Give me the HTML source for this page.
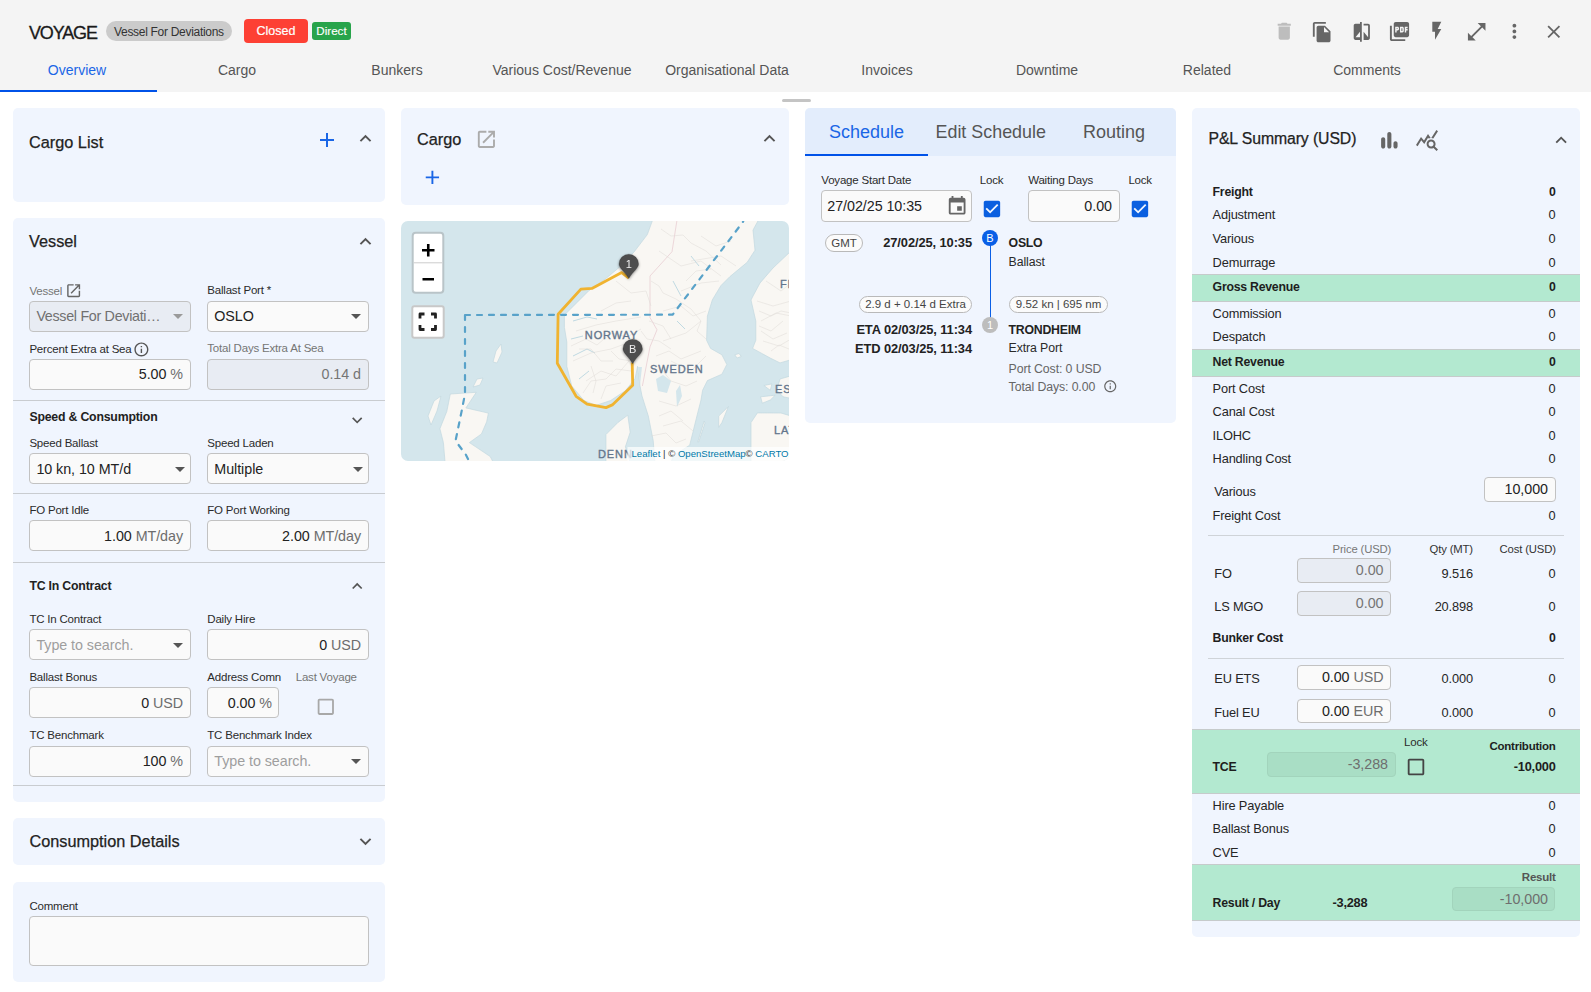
<!DOCTYPE html>
<html><head><meta charset="utf-8">
<style>
html,body{margin:0;padding:0}
body{width:1591px;height:992px;position:relative;overflow:hidden;background:#fff;font-family:"Liberation Sans",sans-serif;color:#212121}
.a{position:absolute}
.t{position:absolute;white-space:nowrap;line-height:20px}
.r{text-align:right}
.c{text-align:center}
.b{font-weight:bold}
.m{-webkit-text-stroke:0.35px currentColor}
.panel{position:absolute;background:#f0f5fe;border-radius:5px}
.inp{position:absolute;box-sizing:border-box;border:1px solid #c2c2c2;border-radius:4px;background:#fafafa}
.dis{background:#e8ecf3}
.hr{position:absolute;height:1px;background:#c9ccd0}
svg{position:absolute}
.lbl{position:absolute;white-space:nowrap;line-height:16px;font-size:12px;color:#2b2b2b}
.val{position:absolute;white-space:nowrap;line-height:20px;font-size:14.5px;color:#212121}
.unit{color:#6d6d6d}
.pl{position:absolute;white-space:nowrap;line-height:20px;font-size:13px;color:#262626}

.ico{position:absolute;fill:#666}
.tab{position:absolute;top:60px;width:160px;text-align:center;font-size:14px;line-height:20px;color:#555;white-space:nowrap}
.lb{position:absolute;white-space:nowrap;line-height:16px;font-size:11.5px;letter-spacing:-0.2px;color:#2b2b2b}
.vt{position:absolute;white-space:nowrap;line-height:20px;font-size:14.3px;letter-spacing:-0.05px;color:#222}
.ph{color:#9e9e9e}
.g{color:#757575 !important}
.h2{position:absolute;white-space:nowrap;line-height:20px;font-size:16.3px;color:#222;-webkit-text-stroke:0.25px #222}
.h3{position:absolute;white-space:nowrap;line-height:16px;font-size:12.3px;font-weight:bold;color:#222;letter-spacing:-0.2px}

.sb{position:absolute;white-space:nowrap;line-height:16px;font-size:12.3px;font-weight:bold;letter-spacing:-0.25px;color:#222}
.sr{position:absolute;white-space:nowrap;line-height:16px;font-size:12.3px;letter-spacing:-0.1px;color:#333}
.chip{position:absolute;box-sizing:border-box;border:1px solid #b9b9b9;border-radius:9px;background:#fbfbfb;font-size:11.5px;line-height:15.5px;text-align:center;color:#444;white-space:nowrap}
.pr{position:absolute;white-space:nowrap;line-height:16px;font-size:12.8px;letter-spacing:-0.15px;color:#262626}
.pb{position:absolute;white-space:nowrap;line-height:16px;font-size:12.3px;font-weight:bold;letter-spacing:-0.25px;color:#1e1e1e}
.grn{position:absolute;left:1192px;width:388px;background:#b3e9d0;border-top:1px solid #c6cbcb;border-bottom:1px solid #c6cbcb;box-sizing:border-box}
</style></head><body>
<!-- HEADER -->
<div class="a" style="left:0;top:0;width:1591px;height:92px;background:#f4f4f4"></div>
<div class="a" style="left:0;top:90px;width:157px;height:2px;background:#0052e8"></div>
<div class="t" style="left:29px;top:23px;font-size:18px;line-height:20px;letter-spacing:-1.15px;color:#1a1a1a;-webkit-text-stroke:0.3px #1a1a1a">VOYAGE</div>


<div class="a" style="left:106px;top:21px;width:126px;height:20px;border-radius:10px;background:#cbcbcb"></div>
<div class="t" style="left:114px;top:21.7px;font-size:12px;line-height:20px;letter-spacing:-0.3px;color:#333">Vessel For Deviations</div>
<div class="a" style="left:244px;top:19px;width:64px;height:24px;border-radius:4px;background:#fd4034"></div>
<div class="t c" style="left:244px;top:21px;width:64px;font-size:12.5px;line-height:20px;color:#fff;-webkit-text-stroke:0.2px #fff">Closed</div>
<div class="a" style="left:312px;top:22px;width:39px;height:18px;border-radius:3px;background:#28a44b"></div>
<div class="t c" style="left:312px;top:21px;width:39px;font-size:11.6px;line-height:20px;color:#fff;-webkit-text-stroke:0.15px #fff">Direct</div>
<div class="tab" style="left:-3px;color:#1a66e6">Overview</div>
<div class="tab" style="left:157px">Cargo</div>
<div class="tab" style="left:317px">Bunkers</div>
<div class="tab" style="left:482px">Various Cost/Revenue</div>
<div class="tab" style="left:647px">Organisational Data</div>
<div class="tab" style="left:807px">Invoices</div>
<div class="tab" style="left:967px">Downtime</div>
<div class="tab" style="left:1127px">Related</div>
<div class="tab" style="left:1287px">Comments</div>
<svg class="ico" style="left:1273px;top:20px;fill:#bdbdbd" width="22.5" height="22.5" viewBox="0 0 24 24"><path d="M6 19c0 1.1.9 2 2 2h8c1.1 0 2-.9 2-2V7H6v12zM19 4h-3.5l-1-1h-5l-1 1H5v2h14V4z"/></svg>
<svg class="ico" style="left:1310.5px;top:20.5px" width="22.3" height="22.3" viewBox="0 0 24 24"><path d="M16 1H4c-1.1 0-2 .9-2 2v14h2V3h12V1zm-1 4l6 6v10c0 1.1-.9 2-2 2H7.99C6.89 23 6 22.1 6 21l.01-14c0-1.1.89-2 1.99-2h7zm-1 7h5.5L14 6.5V12z"/></svg>
<svg class="ico" style="left:1350.8px;top:20.5px" width="21.6" height="21.6" viewBox="0 0 24 24"><path d="M10 3H5c-1.11 0-2 .9-2 2v14c0 1.1.89 2 2 2h5v2h2V1h-2v2zm0 15H5l5-6v6zm9-15h-5v2h5v13l-5-6v9h5c1.1 0 2-.9 2-2V5c0-1.1-.9-2-2-2z"/></svg>
<svg class="ico" style="left:1387.7px;top:19.5px" width="23" height="23" viewBox="0 0 24 24"><path d="M20 2H8c-1.1 0-2 .9-2 2v12c0 1.1.9 2 2 2h12c1.1 0 2-.9 2-2V4c0-1.1-.9-2-2-2zm-8.5 7.5c0 .83-.67 1.5-1.5 1.5H9v2H7.5V7H10c.83 0 1.5.67 1.5 1.5v1zm5 2c0 .83-.67 1.5-1.5 1.5h-2.5V7H15c.83 0 1.5.67 1.5 1.5v3zm4-3H19v1h1.5V11H19v2h-1.5V7h3v1.5zM9 9.5h1v-1H9v1zM4 6H2v14c0 1.1.9 2 2 2h14v-2H4V6zm10 5.5h1v-3h-1v3z"/></svg>
<svg class="ico" style="left:1426.3px;top:20.1px" width="21.6" height="21.6" viewBox="0 0 24 24"><path d="M7 2v11h3v9l7-12h-4l4-8z"/></svg>
<svg class="ico" style="left:1464.6px;top:19.7px" width="23.4" height="23.4" viewBox="0 0 24 24"><path d="M21 11V3h-8l3.29 3.29-10 10L3 13v8h8l-3.29-3.29 10-10z"/></svg>
<svg class="ico" style="left:1502.5px;top:20.1px" width="22.8" height="22.8" viewBox="0 0 24 24"><path d="M12 8c1.1 0 2-.9 2-2s-.9-2-2-2-2 .9-2 2 .9 2 2 2zm0 2c-1.1 0-2 .9-2 2s.9 2 2 2 2-.9 2-2-.9-2-2-2zm0 6c-1.1 0-2 .9-2 2s.9 2 2 2 2-.9 2-2-.9-2-2-2z"/></svg>
<svg class="ico" style="left:1542.8px;top:20.5px" width="21.6" height="21.6" viewBox="0 0 24 24"><path d="M19 6.41L17.59 5 12 10.59 6.41 5 5 6.41 10.59 12 5 17.59 6.41 19 12 13.41 17.59 19 19 17.59 13.41 12z"/></svg>

<!-- LEFT COLUMN -->
<div class="panel" style="left:13px;top:108px;width:372px;height:94px"></div>
<div class="panel" style="left:13px;top:218px;width:372px;height:584px"></div>
<div class="panel" style="left:13px;top:818px;width:372px;height:47px"></div>
<div class="panel" style="left:13px;top:882px;width:372px;height:100px"></div>


<div class="h2" style="left:29px;top:132px">Cargo List</div>
<svg class="ico" style="left:315px;top:127.5px;fill:#1a66e6" width="24" height="24" viewBox="0 0 24 24"><path d="M19 13h-6v6h-2v-6H5v-2h6V5h2v6h6v2z"/></svg>
<svg class="ico" style="left:354px;top:127px;fill:#555" width="23" height="23" viewBox="0 0 24 24"><path d="M12 8l-6 6 1.41 1.41L12 10.83l4.59 4.58L18 14z"/></svg>

<div class="h2" style="left:29px;top:231px">Vessel</div>
<svg class="ico" style="left:354px;top:230px;fill:#555" width="23" height="23" viewBox="0 0 24 24"><path d="M12 8l-6 6 1.41 1.41L12 10.83l4.59 4.58L18 14z"/></svg>

<div class="lb g" style="left:29.4px;top:283px">Vessel</div>
<svg class="ico" style="left:64.8px;top:282px;fill:#666" width="17.3" height="17.3" viewBox="0 0 24 24"><path d="M19 19H5V5h7V3H5c-1.11 0-2 .9-2 2v14c0 1.1.89 2 2 2h14c1.1 0 2-.9 2-2v-7h-2v7zM14 3v2h3.59l-9.83 9.83 1.41 1.41L19 6.41V10h2V3h-7z"/></svg>
<div class="lb" style="left:207.3px;top:282px">Ballast Port *</div>
<div class="inp dis" style="left:29px;top:301px;width:162px;height:31px"></div>
<div class="vt" style="left:36.4px;top:306px;color:#707070;letter-spacing:-0.3px">Vessel For Deviati…</div>
<svg class="ico" style="left:166px;top:304px;fill:#9a9a9a" width="24" height="24" viewBox="0 0 24 24"><path d="M7 10l5 5 5-5z"/></svg>
<div class="inp" style="left:207px;top:301px;width:162px;height:31px"></div>
<div class="vt" style="left:214.3px;top:306px">OSLO</div>
<svg class="ico" style="left:344px;top:304px;fill:#555" width="24" height="24" viewBox="0 0 24 24"><path d="M7 10l5 5 5-5z"/></svg>

<div class="lb" style="left:29.4px;top:341px">Percent Extra at Sea</div>
<svg class="ico" style="left:132.6px;top:340.6px;fill:#555" width="16.8" height="16.8" viewBox="0 0 24 24"><path d="M11 7h2v2h-2zm0 4h2v6h-2zm1-9C6.48 2 2 6.48 2 12s4.48 10 10 10 10-4.48 10-10S17.52 2 12 2zm0 18c-4.41 0-8-3.59-8-8s3.59-8 8-8 8 3.59 8 8-3.59 8-8 8z"/></svg>
<div class="lb g" style="left:207.3px;top:340px">Total Days Extra At Sea</div>
<div class="inp" style="left:29px;top:358.5px;width:162px;height:31px"></div>
<div class="vt r" style="left:29px;width:154px;top:364px">5.00 <span class="unit">%</span></div>
<div class="inp dis" style="left:207px;top:358.5px;width:162px;height:31px"></div>
<div class="vt r g" style="left:207px;width:154px;top:364px">0.14 d</div>
<div class="hr" style="left:13px;top:400px;width:372px"></div>

<div class="h3" style="left:29.4px;top:408.5px">Speed &amp; Consumption</div>
<svg class="ico" style="left:347px;top:409.7px;fill:#555" width="20.4" height="20.4" viewBox="0 0 24 24"><path d="M16.59 8.59L12 13.17 7.41 8.59 6 10l6 6 6-6z"/></svg>
<div class="lb" style="left:29.4px;top:435px">Speed Ballast</div>
<div class="lb" style="left:207.3px;top:435px">Speed Laden</div>
<div class="inp" style="left:29px;top:453.3px;width:162px;height:31px"></div>
<div class="vt" style="left:36.4px;top:459px">10 kn, 10 MT/d</div>
<svg class="ico" style="left:168px;top:457px;fill:#555" width="24" height="24" viewBox="0 0 24 24"><path d="M7 10l5 5 5-5z"/></svg>
<div class="inp" style="left:207px;top:453.3px;width:162px;height:31px"></div>
<div class="vt" style="left:214.3px;top:459px">Multiple</div>
<svg class="ico" style="left:346px;top:457px;fill:#555" width="24" height="24" viewBox="0 0 24 24"><path d="M7 10l5 5 5-5z"/></svg>
<div class="hr" style="left:13px;top:493px;width:372px"></div>

<div class="lb" style="left:29.4px;top:502px">FO Port Idle</div>
<div class="lb" style="left:207.3px;top:502px">FO Port Working</div>
<div class="inp" style="left:29px;top:520.4px;width:162px;height:31px"></div>
<div class="vt r" style="left:29px;width:154px;top:526px">1.00 <span class="unit">MT/day</span></div>
<div class="inp" style="left:207px;top:520.4px;width:162px;height:31px"></div>
<div class="vt r" style="left:207px;width:154px;top:526px">2.00 <span class="unit">MT/day</span></div>
<div class="hr" style="left:13px;top:562px;width:372px"></div>

<div class="h3" style="left:29.4px;top:577.7px">TC In Contract</div>
<svg class="ico" style="left:347px;top:576.3px;fill:#555" width="20.4" height="20.4" viewBox="0 0 24 24"><path d="M12 8l-6 6 1.41 1.41L12 10.83l4.59 4.58L18 14z"/></svg>
<div class="lb" style="left:29.4px;top:611px">TC In Contract</div>
<div class="lb" style="left:207.3px;top:611px">Daily Hire</div>
<div class="inp" style="left:29px;top:629.4px;width:162px;height:31px"></div>
<div class="vt ph" style="left:36.4px;top:635px">Type to search.</div>
<svg class="ico" style="left:166px;top:633px;fill:#555" width="24" height="24" viewBox="0 0 24 24"><path d="M7 10l5 5 5-5z"/></svg>
<div class="inp" style="left:207px;top:629.4px;width:162px;height:31px"></div>
<div class="vt r" style="left:207px;width:154px;top:635px">0 <span class="unit">USD</span></div>

<div class="lb" style="left:29.4px;top:669px">Ballast Bonus</div>
<div class="lb" style="left:207.3px;top:669px">Address Comn</div>
<div class="lb g" style="left:295.7px;top:669px">Last Voyage</div>
<div class="inp" style="left:29px;top:687.4px;width:162px;height:31px"></div>
<div class="vt r" style="left:29px;width:154px;top:693px">0 <span class="unit">USD</span></div>
<div class="inp" style="left:207px;top:687.4px;width:72px;height:31px"></div>
<div class="vt r" style="left:207px;width:65px;top:693px">0.00 <span class="unit">%</span></div>
<svg class="ico" style="left:315.3px;top:695.8px;fill:#a8a8a8" width="21.6" height="21.6" viewBox="0 0 24 24"><path d="M19 5v14H5V5h14m0-2H5c-1.1 0-2 .9-2 2v14c0 1.1.9 2 2 2h14c1.1 0 2-.9 2-2V5c0-1.1-.9-2-2-2z"/></svg>

<div class="lb" style="left:29.4px;top:727px">TC Benchmark</div>
<div class="lb" style="left:207.3px;top:727px">TC Benchmark Index</div>
<div class="inp" style="left:29px;top:745.5px;width:162px;height:31px"></div>
<div class="vt r" style="left:29px;width:154px;top:751px">100 <span class="unit">%</span></div>
<div class="inp" style="left:207px;top:745.5px;width:162px;height:31px"></div>
<div class="vt ph" style="left:214.3px;top:751px">Type to search.</div>
<svg class="ico" style="left:344px;top:749px;fill:#555" width="24" height="24" viewBox="0 0 24 24"><path d="M7 10l5 5 5-5z"/></svg>
<div class="hr" style="left:13px;top:785px;width:372px"></div>

<div class="h2" style="left:29.4px;top:830.5px">Consumption Details</div>
<svg class="ico" style="left:354px;top:830px;fill:#555" width="23" height="23" viewBox="0 0 24 24"><path d="M16.59 8.59L12 13.17 7.41 8.59 6 10l6 6 6-6z"/></svg>

<div class="lb" style="left:29.4px;top:897.6px">Comment</div>
<div class="inp" style="left:29px;top:916px;width:340px;height:50px"></div>

<!-- MIDDLE -->
<div class="panel" style="left:401px;top:108px;width:388px;height:97px"></div>
<div class="a" style="left:782px;top:99px;width:29px;height:3px;border-radius:2px;background:#c4c4c4"></div>
<div class="h2" style="left:417px;top:128.5px">Cargo</div>
<svg class="ico" style="left:474.9px;top:127.9px;fill:#ababab" width="22.8" height="22.8" viewBox="0 0 24 24"><path d="M19 19H5V5h7V3H5c-1.11 0-2 .9-2 2v14c0 1.1.89 2 2 2h14c1.1 0 2-.9 2-2v-7h-2v7zM14 3v2h3.59l-9.83 9.83 1.41 1.41L19 6.41V10h2V3h-7z"/></svg>
<svg class="ico" style="left:758.3px;top:127.3px;fill:#555" width="23" height="23" viewBox="0 0 24 24"><path d="M12 8l-6 6 1.41 1.41L12 10.83l4.59 4.58L18 14z"/></svg>
<svg class="ico" style="left:420.7px;top:166.2px;fill:#1a66e6" width="22.8" height="22.8" viewBox="0 0 24 24"><path d="M19 13h-6v6h-2v-6H5v-2h6V5h2v6h6v2z"/></svg>

<div class="a" style="left:401px;top:221px;width:388px;height:240px;background:#d4e6ec;border-radius:7px;overflow:hidden">
<svg style="left:0;top:0" width="388" height="240" viewBox="0 0 388 240">
<g fill="#f9f7f3" stroke="#c3d9e0" stroke-width="0.7">
<path d="M252,-2 L246.3,13.6 L233,31 L219.5,45.3 L204.9,57.5 L187.8,69.7 L175.6,81.9 L163.4,94.1 L163.4,106.3 L165.8,121 L165.8,145.3 L170.7,164.9 L182.9,179.5 L195.1,184.4 L209.7,179.5 L224.4,169.7 L234.1,157.5 L236.6,145.3 L239,164.9 L241,175 L247.3,195 L252.2,219.5 L254,242 L270,242 L272,235 L288.7,224.2 L291.9,211.3 L296.7,191.9 L300,179 L301.6,169.3 L306.4,159.6 L320.9,153.2 L325.8,143.5 L320.9,133.8 L309.6,127.4 L305.6,119.3 L306.4,95.1 L311.3,79 L313.9,74.6 L320,64.5 L329,55.5 L346.2,41.3 L354,29.2 L352,9.1 L358,-2 Z"/>
<path d="M390,30 L372,47 L359,62 L352,75 L350,79 L354.8,100 L354.8,119.3 L351.6,127.4 L369.3,137.1 L379,141.9 L390,138.7 Z"/>
<path d="M390,154.8 L379,158 L375.8,169.3 L382.2,175.8 L390,177.4 Z"/>
<path d="M359.6,175.8 L374.2,174.2 L369.3,179 L361.3,182.2 Z"/>
<path d="M362.9,164.5 L370.9,162.9 L369.3,169.3 Z"/>
<path d="M356.4,191.9 L380,192 L390,195 L390,242 L350,242 L350,201.6 Z"/>
<path d="M204.9,242 L204.9,213.6 L217,201.4 L226.8,194.1 L229.2,211.2 L224.4,225.8 L229.2,242 Z"/>
<path d="M317.7,195.1 L325.8,187.1 L327.4,185.5 L320.9,201.6 L317.7,206.4 Z"/>
<path d="M303.2,200 L304,202 L297.7,221 L296.7,221 Z"/>
<path d="M333.8,133.8 L338,132.5 L340.3,135.5 L336,137 Z"/>
<path d="M49.3,173 L75.3,171.3 L64.9,186.9 L87.4,192.1 L85.7,200.8 L80.5,212.9 L68.4,221.6 L89.2,235.5 L92.6,242 L44.1,242 L42.4,221.6 L38.9,207.7 L45.8,190.4 Z"/>
<path d="M92,141 L95,130 L100,123 L101,131 L96,142 Z"/>
<path d="M72,166 L76,158 L82,157 L79,164 Z"/>
<path d="M27,195 L33,180 L40,175 L36,190 L30,204 Z"/>
</g>
<g fill="#d4e6ec"><path d="M255,158 L262,154 L270,160 L266,172 L257,170 Z"/><path d="M275,170 L279,164 L281,175 L276,186 Z"/><path d="M237,146 L239,164 L241,146 Z"/></g>
<g fill="none" stroke="#b9d6e0" stroke-width="0.9"><path d="M172,100 L186,96 L196,98"/><path d="M170,118 L182,115"/><path d="M172,135 L186,128 L194,132"/><path d="M178,158 L188,150"/><path d="M272,60 L280,75"/><path d="M290,35 L298,45"/><path d="M276,100 L284,108"/></g>
<g fill="none" stroke="#e6c9cf" stroke-width="0.7"><path d="M276,-1 L271,30.7 L249,55 L249,96.6 L256,108.8 L249,125.8 L241.4,165"/></g>
<g fill="none" stroke="#dedbd6" stroke-width="0.5">
<path d="M175,110 L195,104 L215,100 L240,96"/><path d="M172,140 L190,132 L210,128 L232,120"/><path d="M185,160 L200,150 L215,155 L228,140"/><path d="M200,90 L215,82 L230,80"/>
<path d="M262,120 L285,112 L300,100"/><path d="M258,180 L275,185 L290,178"/><path d="M262,205 L280,200 L292,210"/><path d="M290,40 L320,35 L335,45"/><path d="M280,70 L300,62 L318,60"/><path d="M270,140 L290,150 L305,135"/>
<path d="M360,100 L375,92 L390,95"/><path d="M362,120 L378,125 L390,118"/><path d="M365,60 L380,70 L390,62"/>
<path d="M170,125 L185,118 L196,124 L210,112 L226,116 L240,108"/><path d="M182,172 L190,160 L205,158 L215,148 L230,150"/><path d="M200,178 L205,165 L220,162"/>
<path d="M215,60 L230,72 L245,70 L250,85"/><path d="M258,30 L280,45 L300,40 L320,55"/><path d="M262,90 L280,85 L292,95 L305,90"/>
<path d="M255,135 L268,130 L280,138 L300,130"/><path d="M250,215 L265,212 L275,222 L285,218"/><path d="M248,100 L262,105 L270,118"/>
<path d="M300,15 L315,25 L330,20"/><path d="M260,8 L270,15 L282,14 L290,22 L305,30 L320,44"/><path d="M250,60 L258,65 L262,72 L275,78 L290,88 L300,100"/><path d="M300,100 L296,110 L305,118"/><path d="M240,110 L246,118 L258,120 L270,128"/><path d="M210,130 L218,138 L230,140"/><path d="M190,145 L195,160 L192,172"/><path d="M178,128 L190,128 L200,140 L212,140"/><path d="M262,150 L270,160 L285,165 L296,160"/><path d="M258,195 L270,190 L282,200"/><path d="M358,90 L370,95 L380,90 L390,92"/><path d="M360,110 L372,118 L386,112"/><path d="M370,130 L378,124 L388,128"/><path d="M285,60 L295,50 L310,48"/><path d="M356,80 L372,85 L390,80"/><path d="M358,105 L370,110 L382,100"/>

</g>
<path d="M64,94 L271.6,93.7 L342.2,0.6 M64,94 L64,173 L60.6,190.4 L54.5,219.9 L64.9,233.7 L68.4,241" fill="none" stroke="#58a2c9" stroke-width="2.2" stroke-dasharray="5 7" stroke-linecap="round"/>
<path d="M227.8,57.1 L220.7,51.6 L190.9,67.4 L179.9,68.1 L157.1,93.3 L156.3,142.3 L175.1,175.3 L186.1,183.1 L205,186.6 L211.3,183.9 L231.7,164.3 L231.2,141.5" fill="none" stroke="#f0b330" stroke-width="2.8" stroke-linejoin="round"/>
<g fill="#63758c" stroke="#63758c" stroke-width="0.35" font-family="Liberation Sans" font-size="11" letter-spacing="0.9">
<text x="183.8" y="117.5">NORWAY</text>
<text x="249" y="152">SWEDEN</text>
<text x="379" y="66.5">FI</text>
<text x="374" y="172">ES</text>
<text x="373" y="212.5">LAT</text>
<text x="197" y="236.5">DENN</text>
</g>
<defs><filter id="sh" x="-50%" y="-50%" width="200%" height="200%"><feGaussianBlur in="SourceAlpha" stdDeviation="1.6"/><feOffset dx="0" dy="1" result="b"/><feComponentTransfer><feFuncA type="linear" slope="0.45"/></feComponentTransfer><feMerge><feMergeNode/><feMergeNode in="SourceGraphic"/></feMerge></filter></defs>
<g filter="url(#sh)">
<path d="M227.8,57.6 C225,52 218,47 218,43 A9.8,9.8 0 1 1 237.6,43 C237.6,47 230.6,52 227.8,57.6 Z" fill="#4d4d4d" stroke="rgba(0,0,0,0.15)" stroke-width="1"/>
<text x="227.8" y="47" fill="#eee" font-family="Liberation Sans" font-size="11" text-anchor="middle">1</text>
<path d="M231.7,142.8 C228.9,137 221.9,132 221.9,128 A9.8,9.8 0 1 1 241.5,128 C241.5,132 234.5,137 231.7,142.8 Z" fill="#4d4d4d" stroke="rgba(0,0,0,0.15)" stroke-width="1"/>
<text x="231.7" y="132" fill="#eee" font-family="Liberation Sans" font-size="11" text-anchor="middle">B</text>
</g>
<rect x="226.5" y="226" width="162" height="15" fill="rgba(255,255,255,0.7)"/>
<text x="230.5" y="236.3" font-family="Liberation Sans" font-size="9.6" fill="#333"><tspan fill="#0078a8">Leaflet</tspan> | © <tspan fill="#0078a8">OpenStreetMap</tspan>© <tspan fill="#0078a8">CARTO</tspan></text>
<rect x="11.7" y="11.7" width="30.6" height="60" rx="3" fill="#fff" stroke="#b9c4c8" stroke-width="2"/>
<line x1="12.7" y1="41.8" x2="41.3" y2="41.8" stroke="#ccc" stroke-width="1"/>
<path d="M21,29.3 H33.5 M27.25,23 V35.5" stroke="#000" stroke-width="2.6"/>
<path d="M21.5,58.3 H33" stroke="#000" stroke-width="2.6"/>
<rect x="11.3" y="85.3" width="31.4" height="31.4" rx="2" fill="#fff" stroke="#c8c8c8" stroke-width="2"/>
<path d="M19,97.5 V93 H23.5 M30,93 H34.5 V97.5 M34.5,104 V108.5 H30 M23.5,108.5 H19 V104" fill="none" stroke="#222" stroke-width="2.8" stroke-linejoin="round"/>
</svg>
</div>

<!-- SCHEDULE -->
<div class="panel" style="left:805px;top:108px;width:371px;height:315px"></div>


<div class="a" style="left:805px;top:108px;width:371px;height:47.5px;background:#e3edfc;border-radius:5px 5px 0 0"></div>
<div class="a" style="left:805px;top:153.5px;width:123px;height:2px;background:#0052e8"></div>
<div class="t" style="left:829px;top:121.8px;font-size:18px;color:#1a66e6">Schedule</div>
<div class="t" style="left:935.5px;top:121.8px;font-size:17.9px;color:#555">Edit Schedule</div>
<div class="t" style="left:1083px;top:121.8px;font-size:18px;color:#555">Routing</div>
<div class="lb" style="left:821.3px;top:172.2px">Voyage Start Date</div>
<div class="lb" style="left:979.8px;top:172.2px">Lock</div>
<div class="lb" style="left:1028.2px;top:172.2px">Waiting Days</div>
<div class="lb" style="left:1128.4px;top:172.2px">Lock</div>
<div class="inp" style="left:821px;top:190px;width:151px;height:31.5px"></div>
<div class="vt" style="left:827.3px;top:195.7px">27/02/25 10:35</div>
<svg class="ico" style="left:946px;top:195px;fill:#666" width="22.3" height="22.3" viewBox="0 0 24 24"><path d="M17 12h-5v5h5v-5zM16 1v2H8V1H6v2H5c-1.11 0-1.99.9-1.99 2L3 19c0 1.1.89 2 2 2h14c1.1 0 2-.9 2-2V5c0-1.1-.9-2-2-2h-1V1h-2zm3 18H5V8h14v11z"/></svg>
<svg class="ico" style="left:981.3px;top:197.6px;fill:#0a5fe0" width="21.9" height="21.9" viewBox="0 0 24 24"><path d="M19 3H5c-1.11 0-2 .9-2 2v14c0 1.1.89 2 2 2h14c1.11 0 2-.9 2-2V5c0-1.1-.89-2-2-2zm-9 14l-5-5 1.41-1.41L10 14.17l7.59-7.59L19 8l-9 9z"/></svg>
<div class="inp" style="left:1028px;top:190px;width:91.5px;height:31.5px"></div>
<div class="vt r" style="left:1028px;width:84px;top:195.7px">0.00</div>
<svg class="ico" style="left:1128.8px;top:197.6px;fill:#0a5fe0" width="21.9" height="21.9" viewBox="0 0 24 24"><path d="M19 3H5c-1.11 0-2 .9-2 2v14c0 1.1.89 2 2 2h14c1.11 0 2-.9 2-2V5c0-1.1-.89-2-2-2zm-9 14l-5-5 1.41-1.41L10 14.17l7.59-7.59L19 8l-9 9z"/></svg>

<div class="chip" style="left:825px;top:234px;width:38px;height:18px;line-height:17.5px">GMT</div>
<div class="sb r" style="left:850px;width:122px;top:234.9px;font-size:12.9px;letter-spacing:-0.1px">27/02/25, 10:35</div>
<div class="a" style="left:989.5px;top:244px;width:1.2px;height:74px;background:#0a5fe6"></div>
<div class="a" style="left:982px;top:230px;width:16px;height:16px;border-radius:50%;background:#0a5fe6;color:#fff;font-size:11px;line-height:16px;text-align:center">B</div>
<div class="sb" style="left:1008.6px;top:235px">OSLO</div>
<div class="sr" style="left:1008.6px;top:253.5px;color:#2a2a2a">Ballast</div>
<div class="chip" style="left:859.3px;top:295.6px;width:112.5px;height:17.5px">2.9 d + 0.14 d Extra</div>
<div class="chip" style="left:1009.3px;top:295.6px;width:98.5px;height:17.5px">9.52 kn | 695 nm</div>
<div class="a" style="left:982px;top:317px;width:16px;height:16px;border-radius:50%;background:#bdbdbd;color:#fff;font-size:11px;line-height:16px;text-align:center">1</div>
<div class="sb r" style="left:820px;width:152px;top:322.2px;font-size:12.9px;letter-spacing:-0.1px">ETA 02/03/25, 11:34</div>
<div class="sb r" style="left:820px;width:152px;top:341px;font-size:12.9px;letter-spacing:-0.1px">ETD 02/03/25, 11:34</div>
<div class="sb" style="left:1008.6px;top:322.2px">TRONDHEIM</div>
<div class="sr" style="left:1008.6px;top:339.6px;color:#2a2a2a">Extra Port</div>
<div class="sr" style="left:1008.6px;top:360.9px;color:#666">Port Cost: 0 USD</div>
<div class="sr" style="left:1008.6px;top:378.6px;color:#666">Total Days: 0.00</div>
<svg class="ico" style="left:1102.5px;top:379.4px;fill:#666" width="14.5" height="14.5" viewBox="0 0 24 24"><path d="M11 7h2v2h-2zm0 4h2v6h-2zm1-9C6.48 2 2 6.48 2 12s4.48 10 10 10 10-4.48 10-10S17.52 2 12 2zm0 18c-4.41 0-8-3.59-8-8s3.59-8 8-8 8 3.59 8 8-3.59 8-8 8z"/></svg>

<!-- P&L -->
<div class="panel" style="left:1192px;top:108px;width:388px;height:829px"></div>

<div class="h2" style="left:1208.5px;top:129.4px;font-size:15.8px;letter-spacing:-0.1px">P&amp;L Summary (USD)</div>
<svg class="ico" style="left:1377.4px;top:127.9px;fill:#666" width="24.7" height="24.7" viewBox="0 0 24 24"><path d="M6 20c1.1 0 2-.9 2-2v-7c0-1.1-.9-2-2-2s-2 .9-2 2v7c0 1.1.9 2 2 2zm10-5v3c0 1.1.9 2 2 2s2-.9 2-2v-3c0-1.1-.9-2-2-2s-2 .9-2 2zm-6 3c0 1.1.9 2 2 2s2-.9 2-2V6c0-1.1-.9-2-2-2s-2 .9-2 2v12z"/></svg>
<svg class="ico" style="left:1415px;top:128.2px;fill:#666" width="24" height="24" viewBox="0 0 24 24"><path d="M19.88 18.47c.44-.7.7-1.51.7-2.39 0-2.49-2.01-4.5-4.5-4.5s-4.5 2.01-4.5 4.5 2.01 4.5 4.49 4.5c.88 0 1.7-.26 2.39-.7L21.58 23 23 21.58l-3.12-3.11zm-3.8.11c-1.38 0-2.5-1.12-2.5-2.5s1.12-2.5 2.5-2.5 2.5 1.12 2.5 2.5-1.12 2.5-2.5 2.5zm-.36-8.5c-.74.02-1.45.18-2.1.45l-.55-.83-3.8 6.18-3.01-3.52-3.630 5.81L1 17l5-8 3 3.5L13 6l2.72 4.08zm2.59.5c-.64-.28-1.33-.45-2.05-.49L21.38 2 23 3.18l-4.69 7.4z"/></svg>
<svg class="ico" style="left:1550.2px;top:129.2px;fill:#555" width="22.3" height="22.3" viewBox="0 0 24 24"><path d="M12 8l-6 6 1.41 1.41L12 10.83l4.59 4.58L18 14z"/></svg>
<div class="grn" style="top:273.6px;height:28px"></div>
<div class="grn" style="top:348.9px;height:28px"></div>
<div class="grn" style="top:729.3px;height:64.5px"></div>
<div class="grn" style="top:864px;height:57px"></div>
<div class="pb" style="left:1212.6px;top:184.0px">Freight</div>
<div class="pb r" style="left:1480px;width:75.5px;top:184.0px">0</div>
<div class="pr" style="left:1212.6px;top:207.4px">Adjustment</div>
<div class="pr r" style="left:1480px;width:75.5px;top:207.4px">0</div>
<div class="pr" style="left:1212.6px;top:230.7px">Various</div>
<div class="pr r" style="left:1480px;width:75.5px;top:230.7px">0</div>
<div class="pr" style="left:1212.6px;top:254.7px">Demurrage</div>
<div class="pr r" style="left:1480px;width:75.5px;top:254.7px">0</div>
<div class="pb" style="left:1212.6px;top:278.8px">Gross Revenue</div>
<div class="pb r" style="left:1480px;width:75.5px;top:278.8px">0</div>
<div class="pr" style="left:1212.6px;top:305.7px">Commission</div>
<div class="pr r" style="left:1480px;width:75.5px;top:305.7px">0</div>
<div class="pr" style="left:1212.6px;top:328.7px">Despatch</div>
<div class="pr r" style="left:1480px;width:75.5px;top:328.7px">0</div>
<div class="pb" style="left:1212.6px;top:354.0px">Net Revenue</div>
<div class="pb r" style="left:1480px;width:75.5px;top:354.0px">0</div>
<div class="pr" style="left:1212.6px;top:380.7px">Port Cost</div>
<div class="pr r" style="left:1480px;width:75.5px;top:380.7px">0</div>
<div class="pr" style="left:1212.6px;top:403.7px">Canal Cost</div>
<div class="pr r" style="left:1480px;width:75.5px;top:403.7px">0</div>
<div class="pr" style="left:1212.6px;top:427.7px">ILOHC</div>
<div class="pr r" style="left:1480px;width:75.5px;top:427.7px">0</div>
<div class="pr" style="left:1212.6px;top:450.6px">Handling Cost</div>
<div class="pr r" style="left:1480px;width:75.5px;top:450.6px">0</div>
<div class="pr" style="left:1214.3px;top:483.8px">Various</div>
<div class="inp" style="left:1484px;top:477.3px;width:71.5px;height:24.5px"></div>
<div class="vt r" style="left:1484px;width:64px;top:479.3px">10,000</div>
<div class="pr" style="left:1212.6px;top:507.5px">Freight Cost</div>
<div class="pr r" style="left:1480px;width:75.5px;top:507.5px">0</div>
<div class="hr" style="left:1208px;top:535px;width:356px;background:#cfd3d8"></div>
<div class="pr r" style="left:1290px;width:101.2px;top:540.5px;font-size:11.3px;color:#777">Price (USD)</div>
<div class="pr r" style="left:1400px;width:72.9px;top:540.5px;font-size:11.3px;color:#333">Qty (MT)</div>
<div class="pr r" style="left:1480px;width:75.8px;top:540.5px;font-size:11.3px;color:#333">Cost (USD)</div>
<div class="pr" style="left:1214.3px;top:565.5px">FO</div>
<div class="inp dis" style="left:1297.3px;top:558.2px;width:93.4px;height:24.5px"></div>
<div class="vt r g" style="left:1297px;width:86.5px;top:560.2px">0.00</div>
<div class="pr r" style="left:1400px;width:72.9px;top:565.5px">9.516</div>
<div class="pr r" style="left:1480px;width:75.5px;top:565.5px">0</div>
<div class="pr" style="left:1214.3px;top:598.7px">LS MGO</div>
<div class="inp dis" style="left:1297.3px;top:591.3px;width:93.4px;height:24.5px"></div>
<div class="vt r g" style="left:1297px;width:86.5px;top:593.3px">0.00</div>
<div class="pr r" style="left:1400px;width:72.9px;top:598.7px">20.898</div>
<div class="pr r" style="left:1480px;width:75.5px;top:598.7px">0</div>
<div class="pb" style="left:1212.6px;top:629.8px">Bunker Cost</div>
<div class="pb r" style="left:1480px;width:75.5px;top:629.8px">0</div>
<div class="hr" style="left:1208px;top:658px;width:356px;background:#cfd3d8"></div>
<div class="pr" style="left:1214.3px;top:671.4px">EU ETS</div>
<div class="inp" style="left:1297.3px;top:665.4px;width:93.4px;height:24.5px"></div>
<div class="vt r" style="left:1297px;width:86.5px;top:667.4px">0.00 <span class="unit">USD</span></div>
<div class="pr r" style="left:1400px;width:72.9px;top:671.4px">0.000</div>
<div class="pr r" style="left:1480px;width:75.5px;top:671.4px">0</div>
<div class="pr" style="left:1214.3px;top:704.6px">Fuel EU</div>
<div class="inp" style="left:1297.3px;top:698.5px;width:93.4px;height:24.5px"></div>
<div class="vt r" style="left:1297px;width:86.5px;top:700.5px">0.00 <span class="unit">EUR</span></div>
<div class="pr r" style="left:1400px;width:72.9px;top:704.6px">0.000</div>
<div class="pr r" style="left:1480px;width:75.5px;top:704.6px">0</div>
<div class="lb" style="left:1404px;top:734.1px">Lock</div>
<div class="pb r" style="left:1450px;width:105.5px;top:738.2px;font-size:11.5px">Contribution</div>
<div class="pb" style="left:1212.6px;top:758.6px">TCE</div>
<div class="inp" style="left:1267.2px;top:752.3px;width:128.6px;height:24.5px;background:#a9dec5;border-color:#a2d4bc"></div>
<div class="vt r" style="left:1267px;width:121px;top:754.3px;color:#6e6e6e">-3,288</div>
<svg class="ico" style="left:1405.2px;top:755.6px;fill:#444" width="22" height="22" viewBox="0 0 24 24"><path d="M19 5v14H5V5h14m0-2H5c-1.1 0-2 .9-2 2v14c0 1.1.9 2 2 2h14c1.1 0 2-.9 2-2V5c0-1.1-.9-2-2-2z"/></svg>
<div class="pb r" style="left:1450px;width:105.5px;top:758.6px;font-size:12.8px">-10,000</div>
<div class="pr" style="left:1212.6px;top:797.9px">Hire Payable</div>
<div class="pr r" style="left:1480px;width:75.5px;top:797.9px">0</div>
<div class="pr" style="left:1212.6px;top:820.9px">Ballast Bonus</div>
<div class="pr r" style="left:1480px;width:75.5px;top:820.9px">0</div>
<div class="pr" style="left:1212.6px;top:844.6px">CVE</div>
<div class="pr r" style="left:1480px;width:75.5px;top:844.6px">0</div>
<div class="pb r" style="left:1450px;width:105.5px;top:869.3px;font-size:11.5px;color:#555">Result</div>
<div class="pb" style="left:1212.6px;top:894.9px">Result / Day</div>
<div class="pb" style="left:1332.5px;top:894.9px;font-size:12.8px">-3,288</div>
<div class="inp" style="left:1452.2px;top:887.3px;width:103.3px;height:24px;background:#a9dec5;border-color:#a2d4bc"></div>
<div class="vt r" style="left:1452px;width:96px;top:889.3px;color:#6e6e6e">-10,000</div>
</body></html>
